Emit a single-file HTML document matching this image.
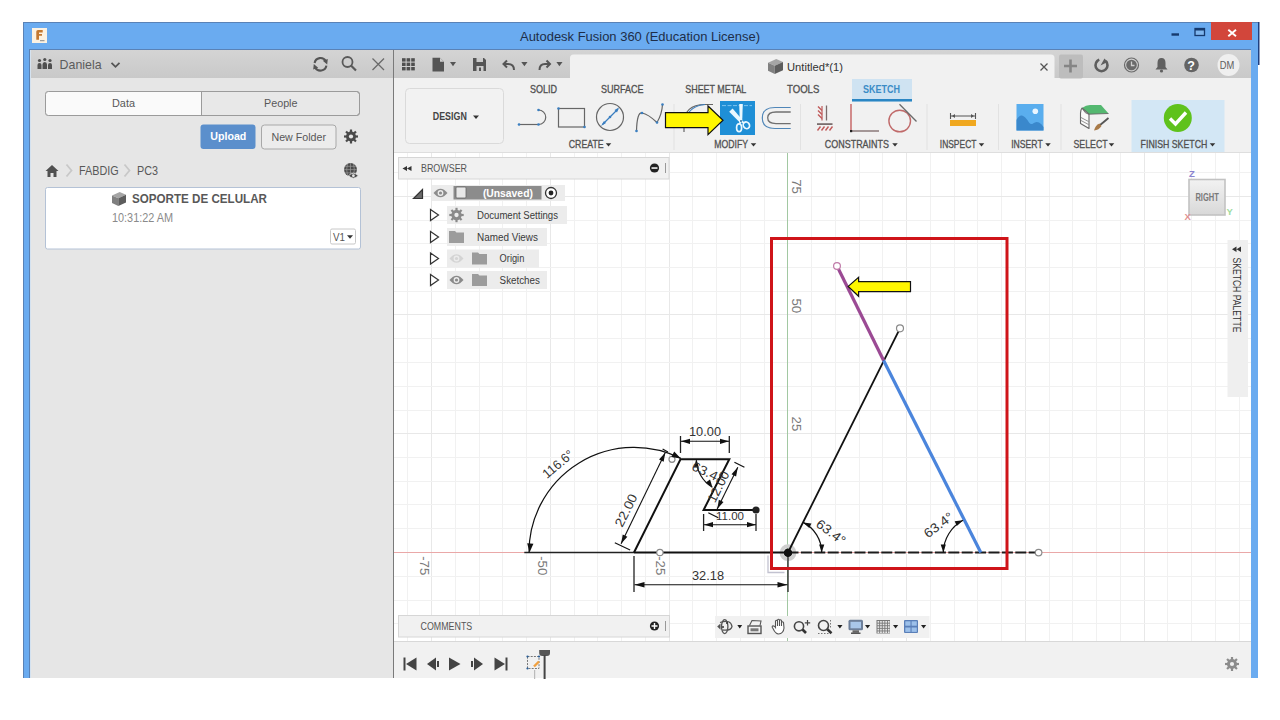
<!DOCTYPE html>
<html><head><meta charset="utf-8"><style>
html,body{margin:0;padding:0;background:#fff;}
body{width:1280px;height:720px;overflow:hidden;}
svg{display:block;font-family:"Liberation Sans",sans-serif;}
</style></head><body>
<svg width="1280" height="720" viewBox="0 0 1280 720">
<rect x="0" y="0" width="1280" height="720" fill="#ffffff" />
<rect x="23" y="22" width="1235" height="656" fill="#6aabf0" />
<rect x="23" y="22" width="1" height="656" fill="#5a82b6" />
<rect x="23" y="22" width="1235" height="1" fill="#5a82b6" />
<rect x="1258" y="22" width="1.5" height="43" fill="#1f3f80" />
<rect x="32" y="28" width="15" height="15" fill="#fdf2e2" />
<path d="M36.3,39.7 V31.5 Q36.3,30 38,30 H42.7 V32.6 H39 V34 H42 V35.8 H39 V39.7 Z" fill="#c47830" stroke="none" stroke-width="1" />
<rect x="40" y="40.2" width="4.5" height="1" fill="#888" />
<text x="520" y="40.5" font-size="13.2" fill="#1e2e48" textLength="240" lengthAdjust="spacingAndGlyphs" >Autodesk Fusion 360 (Education License)</text>
<rect x="1171.5" y="33.3" width="7.5" height="2.4" fill="#163a6e" />
<rect x="1195" y="28.5" width="9.5" height="7" fill="#7fb6ee" stroke="#163a6e" stroke-width="1.3"/>
<rect x="1195" y="28" width="9.5" height="2.5" fill="#163a6e" />
<rect x="1211" y="22" width="41" height="18" fill="#d2463b" />
<path d="M1228.3,29.8 L1236,36.3 M1236,29.8 L1228.3,36.3" fill="none" stroke="#fff" stroke-width="1.9" />
<rect x="30" y="50" width="364" height="628" fill="#e6e6e6" />
<defs><linearGradient id="hdr" x1="0" y1="0" x2="0" y2="1"><stop offset="0" stop-color="#d4d4d4"/><stop offset="1" stop-color="#c9c9c9"/></linearGradient></defs>
<rect x="30" y="50" width="1221" height="28" fill="url(#hdr)" />
<rect x="29" y="49" width="1222" height="1" fill="#5a82b6" />
<rect x="29" y="49" width="1" height="629" fill="#5a82b6" />
<rect x="30" y="50" width="1" height="628" fill="#d4e2f0" />
<rect x="394" y="78" width="857" height="75" fill="#f1f1f1" />
<rect x="394" y="152" width="857" height="1" fill="#dedede" />
<rect x="394" y="153" width="857" height="488" fill="#ffffff" />
<rect x="394" y="641" width="857" height="37" fill="#f1f1f1" />
<rect x="394" y="641" width="857" height="1" fill="#d8d8d8" />
<rect x="393" y="50" width="1" height="628" fill="#7a7a7a" />
<text x="59.6" y="69" font-size="12.8" fill="#5c5c5c" textLength="42" lengthAdjust="spacingAndGlyphs" >Daniela</text>
<circle cx="39.5" cy="60.5" r="1.6" fill="#505050"/>
<circle cx="44.8" cy="59.5" r="1.6" fill="#505050"/>
<circle cx="50" cy="60.5" r="1.6" fill="#505050"/>
<path d="M37.5,69 V65 Q37.5,63 39.5,63 Q41.5,63 41.5,65 V69 Z M42.5,69 V64.5 Q42.5,62 44.8,62 Q47,62 47,64.5 V69 Z M48,69 V65 Q48,63 50,63 Q52,63 52,65 V69 Z" fill="#505050" stroke="none" stroke-width="1" />
<path d="M111.5,62.8 L115.5,66.8 L119.5,62.8" fill="none" stroke="#555" stroke-width="1.8" />
<path d="M314.6,63 A6,6 0 0 1 325.8,61.2 M326.4,65.6 A6,6 0 0 1 315.2,67.4" fill="none" stroke="#555" stroke-width="2.1" />
<path d="M322.8,60.8 L327.8,59 L327.2,64.6 Z M318.2,67.8 L313.2,69.6 L313.8,64 Z" fill="#555" stroke="none" stroke-width="1" />
<circle cx="347.5" cy="62" r="5" fill="none" stroke="#5a5a5a" stroke-width="1.8"/>
<path d="M351,65.5 L356,70.5" fill="none" stroke="#5a5a5a" stroke-width="2.2" />
<path d="M372.5,58.5 L384,70 M384,58.5 L372.5,70" fill="none" stroke="#6a6a6a" stroke-width="1.3" />
<rect x="45.5" y="91.5" width="314" height="24" fill="#e8e8e8" rx="3" stroke="#9b9b9b" stroke-width="1"/>
<path d="M45.5,94.5 Q45.5,91.5 48.5,91.5 H201 V115.5 H48.5 Q45.5,115.5 45.5,112.5 Z" fill="#fafafa" stroke="none" stroke-width="1" />
<rect x="45.5" y="91.5" width="314" height="24" fill="none" rx="3" stroke="#9b9b9b" stroke-width="1"/>
<rect x="201" y="91.5" width="1" height="24" fill="#9b9b9b" />
<text x="112" y="107" font-size="11.5" fill="#585858" textLength="23" lengthAdjust="spacingAndGlyphs" >Data</text>
<text x="264" y="107" font-size="11.5" fill="#585858" textLength="33.5" lengthAdjust="spacingAndGlyphs" >People</text>
<rect x="200.5" y="124.5" width="55" height="24.5" fill="#5b8fcc" rx="3"/>
<text x="210.3" y="140.2" font-size="11.5" fill="#fff" textLength="36" lengthAdjust="spacingAndGlyphs" font-weight="bold" >Upload</text>
<rect x="261.5" y="125" width="74.5" height="24" fill="#ececec" rx="3" stroke="#a8a8a8" stroke-width="1"/>
<text x="271.5" y="141.2" font-size="11.5" fill="#585858" textLength="54.5" lengthAdjust="spacingAndGlyphs" >New Folder</text>
<line x1="351" y1="136.5" x2="358.00" y2="136.50" stroke="#4a4a4a" stroke-width="2.2"/><line x1="351" y1="136.5" x2="355.95" y2="141.45" stroke="#4a4a4a" stroke-width="2.2"/><line x1="351" y1="136.5" x2="351.00" y2="143.50" stroke="#4a4a4a" stroke-width="2.2"/><line x1="351" y1="136.5" x2="346.05" y2="141.45" stroke="#4a4a4a" stroke-width="2.2"/><line x1="351" y1="136.5" x2="344.00" y2="136.50" stroke="#4a4a4a" stroke-width="2.2"/><line x1="351" y1="136.5" x2="346.05" y2="131.55" stroke="#4a4a4a" stroke-width="2.2"/><line x1="351" y1="136.5" x2="351.00" y2="129.50" stroke="#4a4a4a" stroke-width="2.2"/><line x1="351" y1="136.5" x2="355.95" y2="131.55" stroke="#4a4a4a" stroke-width="2.2"/><circle cx="351" cy="136.5" r="5.04" fill="#4a4a4a"/><circle cx="351" cy="136.5" r="2.10" fill="#e6e6e6"/>
<path d="M45.5,171 L52,165 L58.5,171 H56.5 V177 H53.5 V173 H50.5 V177 H47.5 V171 Z" fill="#505050" stroke="none" stroke-width="1" />
<path d="M66.5,164.5 L71.5,170.5 L66.5,176.5" fill="none" stroke="#c8c8c8" stroke-width="1.8" />
<text x="79" y="175.2" font-size="12.3" fill="#585858" textLength="39.6" lengthAdjust="spacingAndGlyphs" >FABDIG</text>
<path d="M124.5,164.5 L129.5,170.5 L124.5,176.5" fill="none" stroke="#c8c8c8" stroke-width="1.8" />
<text x="137" y="175.2" font-size="12.3" fill="#585858" textLength="21" lengthAdjust="spacingAndGlyphs" >PC3</text>
<circle cx="350.5" cy="169.6" r="6.5" fill="#4a4a4a"/>
<path d="M344,169.6 H357 M350.5,163 V176 M345,166.3 H356 M345,172.9 H356 M347.5,164 Q345.8,169.6 347.5,175.2 M353.5,164 Q355.2,169.6 353.5,175.2" fill="none" stroke="#9a9a9a" stroke-width="0.7" />
<path d="M348.5,175.7 Q353.4,170.8 358.3,175.7 Q353.4,180.6 348.5,175.7 Z" fill="#4a4a4a" stroke="#e6e6e6" stroke-width="0.8" />
<circle cx="353.4" cy="175.7" r="1.4" fill="#e6e6e6"/>
<rect x="45.5" y="187.5" width="315" height="61.5" fill="#ffffff" stroke="#b4c2d6" stroke-width="1" rx="2"/>
<path d="M112,195.5 L119.7,192 L126,194.8 L118.3,198.3 Z" fill="#a5a5a5"/>
<path d="M112,195.5 L118.3,198.3 L118.3,206 L112,202.92 Z" fill="#808080"/>
<path d="M118.3,198.3 L126,194.8 L126,202.5 L118.3,206 Z" fill="#5d5d5d"/>
<text x="132" y="203.4" font-size="13" fill="#585858" textLength="135" lengthAdjust="spacingAndGlyphs" font-weight="bold" >SOPORTE DE CELULAR</text>
<text x="112" y="221.6" font-size="12" fill="#8a8a8a" textLength="61" lengthAdjust="spacingAndGlyphs" >10:31:22 AM</text>
<rect x="330.5" y="229" width="25" height="15" fill="#fff" stroke="#c8c8c8" stroke-width="1" rx="1.5"/>
<text x="333" y="240.5" font-size="10.5" fill="#555" textLength="12" lengthAdjust="spacingAndGlyphs" >V1</text>
<path d="M347.0,235.3 L353.0,235.3 L350,238.8 Z" fill="#333" stroke="none" stroke-width="1" />
<rect x="402.0" y="58.2" width="3.6" height="3.4" fill="#4f4f4f" />
<rect x="402.0" y="62.6" width="3.6" height="3.4" fill="#4f4f4f" />
<rect x="402.0" y="67.0" width="3.6" height="3.4" fill="#4f4f4f" />
<rect x="406.6" y="58.2" width="3.6" height="3.4" fill="#4f4f4f" />
<rect x="406.6" y="62.6" width="3.6" height="3.4" fill="#4f4f4f" />
<rect x="406.6" y="67.0" width="3.6" height="3.4" fill="#4f4f4f" />
<rect x="411.2" y="58.2" width="3.6" height="3.4" fill="#4f4f4f" />
<rect x="411.2" y="62.6" width="3.6" height="3.4" fill="#4f4f4f" />
<rect x="411.2" y="67.0" width="3.6" height="3.4" fill="#4f4f4f" />
<path d="M432.5,57.7 H440 L444,61.7 V71.5 H432.5 Z" fill="#555" stroke="none" stroke-width="1" />
<path d="M440,57.7 V61.7 H444 Z" fill="#cfcfcf" stroke="none" stroke-width="1" />
<path d="M450,62 H456 L453,66.2 Z" fill="#555" stroke="none" stroke-width="1" />
<path d="M473,58 H484 L486,60 V71 H473 Z" fill="#555" stroke="none" stroke-width="1" />
<rect x="476.5" y="58" width="6.5" height="4" fill="#cbcbcb" />
<rect x="476.5" y="66" width="7" height="5" fill="#cbcbcb" />
<rect x="479" y="67.5" width="2" height="3.5" fill="#555" />
<path d="M507,60.5 L503.5,64 L507,67.5" fill="none" stroke="#555" stroke-width="2" />
<path d="M504,64 H508 Q514,64 514,70" fill="none" stroke="#555" stroke-width="2" />
<path d="M521.3,62 H527.5 L524.4,66.2 Z" fill="#555" stroke="none" stroke-width="1" />
<path d="M546.5,60.5 L550,64 L546.5,67.5" fill="none" stroke="#555" stroke-width="2" />
<path d="M549.5,64 H545 Q539.5,64 539.5,70" fill="none" stroke="#555" stroke-width="2" />
<path d="M556.4,62 H562.5 L559.4,66.2 Z" fill="#555" stroke="none" stroke-width="1" />
<path d="M570,78 V58 Q570,54.5 573.5,54.5 H1051 Q1054.5,54.5 1054.5,58 V78 Z" fill="#f1f1f1" stroke="none" stroke-width="1" />
<path d="M768,62.75 L776.25,59 L783,62.0 L774.75,65.75 Z" fill="#a5a5a5"/>
<path d="M768,62.75 L774.75,65.75 L774.75,74 L768,70.7 Z" fill="#808080"/>
<path d="M774.75,65.75 L783,62.0 L783,70.25 L774.75,74 Z" fill="#5d5d5d"/>
<text x="787" y="70.9" font-size="11" fill="#333" textLength="56" lengthAdjust="spacingAndGlyphs" >Untitled*(1)</text>
<path d="M1040.5,63.5 L1047.5,70.5 M1047.5,63.5 L1040.5,70.5" fill="none" stroke="#555" stroke-width="1.3" />
<rect x="1059" y="54.5" width="24" height="24" fill="#bdbdbd" rx="2"/>
<path d="M1070.5,59.5 V72.5 M1064,66 H1077" fill="none" stroke="#858585" stroke-width="2.6" />
<circle cx="1101.5" cy="65.2" r="6" fill="none" stroke="#5e5e5e" stroke-width="2.6" stroke-dasharray="30 7.7" transform="rotate(-45 1101.5 65.2)"/>
<path d="M1100.5,65.5 L1104.5,58.5 L1107.5,62 Z" fill="#5e5e5e" stroke="none" stroke-width="1" />
<circle cx="1131.5" cy="65" r="7" fill="none" stroke="#6a6a6a" stroke-width="1.2"/><circle cx="1131.5" cy="65" r="5.3" fill="#6a6a6a"/>
<path d="M1131.5,61.5 V65.5 H1134.5" fill="none" stroke="#cfcfcf" stroke-width="1.3" />
<path d="M1155.5,69.5 H1167.5 L1165.5,67 V63 Q1165.5,58 1161.5,58 Q1157.5,58 1157.5,63 V67 Z" fill="#606060" stroke="none" stroke-width="1" />
<circle cx="1161.5" cy="71" r="1.6" fill="#606060"/>
<circle cx="1191.5" cy="65" r="7.3" fill="#646464"/>
<text x="1187.3" y="69.8" font-size="12.5" fill="#fff" font-weight="bold" >?</text>
<circle cx="1228.5" cy="65" r="11" fill="#efefef"/>
<text x="1219.8" y="69.3" font-size="10.5" fill="#606060" textLength="14.5" lengthAdjust="spacingAndGlyphs" >DM</text>
<rect x="405.5" y="88.5" width="98" height="55" fill="#f2f2f2" rx="4" stroke="#dadada" stroke-width="1"/>
<text x="432.8" y="120.2" font-size="10.5" fill="#444" textLength="34" lengthAdjust="spacingAndGlyphs" font-weight="bold" >DESIGN</text>
<path d="M473.0,115.5 L479.0,115.5 L476,119.0 Z" fill="#333" stroke="none" stroke-width="1" />
<text x="530" y="93" font-size="10.5" fill="#505050" textLength="27" lengthAdjust="spacingAndGlyphs" stroke="#505050" stroke-width="0.3">SOLID</text>
<text x="601" y="93" font-size="10.5" fill="#505050" textLength="42.5" lengthAdjust="spacingAndGlyphs" stroke="#505050" stroke-width="0.3">SURFACE</text>
<text x="685.3" y="93" font-size="10.5" fill="#505050" textLength="61" lengthAdjust="spacingAndGlyphs" stroke="#505050" stroke-width="0.3">SHEET METAL</text>
<text x="787" y="93" font-size="10.5" fill="#505050" textLength="32.3" lengthAdjust="spacingAndGlyphs" stroke="#505050" stroke-width="0.3">TOOLS</text>
<rect x="852" y="79" width="60" height="22.5" fill="#cfe3f2" />
<rect x="852" y="99" width="60" height="2.5" fill="#2a86c4" />
<text x="863" y="93" font-size="10.5" fill="#3b8cc6" textLength="37" lengthAdjust="spacingAndGlyphs" font-weight="bold" >SKETCH</text>
<rect x="1131.5" y="100" width="93" height="52" fill="#d3e7f5" />
<text x="568.8" y="148.4" font-size="10.5" fill="#505050" textLength="34.8" lengthAdjust="spacingAndGlyphs" stroke="#505050" stroke-width="0.3">CREATE</text>
<path d="M605.75,143.125 L611.25,143.125 L608.5,146.375 Z" fill="#333" stroke="none" stroke-width="1" />
<text x="714.2" y="148.4" font-size="10.5" fill="#505050" textLength="33.8" lengthAdjust="spacingAndGlyphs" stroke="#505050" stroke-width="0.3">MODIFY</text>
<path d="M750.75,143.125 L756.25,143.125 L753.5,146.375 Z" fill="#333" stroke="none" stroke-width="1" />
<text x="824.8" y="148.4" font-size="10.5" fill="#505050" textLength="64.2" lengthAdjust="spacingAndGlyphs" stroke="#505050" stroke-width="0.3">CONSTRAINTS</text>
<path d="M892.25,143.125 L897.75,143.125 L895,146.375 Z" fill="#333" stroke="none" stroke-width="1" />
<text x="939.8" y="148.4" font-size="10.5" fill="#505050" textLength="36.6" lengthAdjust="spacingAndGlyphs" stroke="#505050" stroke-width="0.3">INSPECT</text>
<path d="M978.75,143.125 L984.25,143.125 L981.5,146.375 Z" fill="#333" stroke="none" stroke-width="1" />
<text x="1011.2" y="148.4" font-size="10.5" fill="#505050" textLength="31.5" lengthAdjust="spacingAndGlyphs" stroke="#505050" stroke-width="0.3">INSERT</text>
<path d="M1045.25,143.125 L1050.75,143.125 L1048,146.375 Z" fill="#333" stroke="none" stroke-width="1" />
<text x="1073.5" y="148.4" font-size="10.5" fill="#505050" textLength="34.2" lengthAdjust="spacingAndGlyphs" stroke="#505050" stroke-width="0.3">SELECT</text>
<path d="M1108.75,143.125 L1114.25,143.125 L1111.5,146.375 Z" fill="#333" stroke="none" stroke-width="1" />
<text x="1140.6" y="148.4" font-size="10.5" fill="#505050" textLength="66.7" lengthAdjust="spacingAndGlyphs" stroke="#505050" stroke-width="0.3">FINISH SKETCH</text>
<path d="M1209.75,143.125 L1215.25,143.125 L1212.5,146.375 Z" fill="#333" stroke="none" stroke-width="1" />
<rect x="673.5" y="104" width="1" height="46" fill="#e2e2e2" />
<rect x="800" y="104" width="1" height="46" fill="#e2e2e2" />
<rect x="926.5" y="104" width="1" height="46" fill="#e2e2e2" />
<rect x="998" y="104" width="1" height="46" fill="#e2e2e2" />
<rect x="1060.5" y="104" width="1" height="46" fill="#e2e2e2" />
<path d="M519,124.5 H538.5" fill="none" stroke="#666" stroke-width="1.2" />
<path d="M538.5,110 A7.2,7.2 0 0 1 538.5,124.5" fill="none" stroke="#666" stroke-width="1.2" />
<circle cx="519" cy="124.5" r="1.3" fill="#3a7ec0"/>
<circle cx="538.5" cy="124.5" r="1.3" fill="#3a7ec0"/>
<circle cx="538.5" cy="110" r="1.3" fill="#3a7ec0"/>
<rect x="558.5" y="108.5" width="26" height="18.5" fill="none" stroke="#666" stroke-width="1.2"/>
<circle cx="558.5" cy="108.5" r="1.3" fill="#3a7ec0"/>
<circle cx="584.5" cy="127" r="1.3" fill="#3a7ec0"/>
<circle cx="610" cy="117" r="13.5" fill="none" stroke="#666" stroke-width="1.2"/>
<path d="M602.5,124.5 L618,109" fill="none" stroke="#3a7ec0" stroke-width="1.2" />
<path d="M601,126 L604,121 L606,123 Z M619,107.5 L614.5,110 L617,112.5 Z" fill="#3a7ec0" stroke="none" stroke-width="1" />
<circle cx="610" cy="117" r="1.3" fill="#3a7ec0"/>
<path d="M636.5,131 Q637,112 642,113 Q648,114 657,122.5 Q662,114 662.5,104.5" fill="none" stroke="#666" stroke-width="1.2" />
<circle cx="636.5" cy="131" r="1.3" fill="#3a7ec0"/>
<circle cx="642" cy="113" r="1.3" fill="#3a7ec0"/>
<circle cx="657" cy="122.5" r="1.3" fill="#3a7ec0"/>
<circle cx="662.5" cy="104.5" r="1.3" fill="#3a7ec0"/>
<path d="M684,132 V124 Q684,104.5 705,104.5 H713" fill="none" stroke="#666" stroke-width="1.2" />
<path d="M686,118 Q690,106 705,104.5" fill="none" stroke="#3a7ec0" stroke-width="1.2" />
<rect x="720" y="101" width="35" height="34" fill="#1f8fd6" />
<path d="M722,105.6 H752" fill="none" stroke="#7cc4f0" stroke-width="1" stroke-dasharray="4 1.5"/>
<path d="M739.2,104 L742.8,104 L742.2,121.5 L739.8,121.5 Z" fill="#eaf8ff" stroke="none" stroke-width="1" />
<path d="M729.2,111.8 L732.6,108.4 L742.3,119.8 L739.6,122.3 Z" fill="#eaf8ff" stroke="none" stroke-width="1" />
<ellipse cx="739.1" cy="127.8" rx="2.5" ry="3.9" fill="none" stroke="#eaf8ff" stroke-width="1.7"/>
<ellipse cx="746.4" cy="125.3" rx="3" ry="3.5" transform="rotate(-35 746.4 125.3)" fill="none" stroke="#eaf8ff" stroke-width="1.7"/>
<path d="M740.6,121 L739.6,124 M741.4,121.2 L744,123" fill="none" stroke="#eaf8ff" stroke-width="1.8" />
<circle cx="741" cy="121" r="0.9" fill="#1a5f90"/>
<path d="M790.7,107.5 H775 Q762.3,107.5 762.3,118 Q762.3,128.5 775,128.5 H790.7" fill="none" stroke="#4f86b8" stroke-width="1.2" />
<path d="M790.7,112 H776 Q767.7,112 767.7,117.8 Q767.7,123.6 776,123.6 H790.7" fill="none" stroke="#707070" stroke-width="1.3" />
<path d="M665.5,112.7 H708 V106 L723,120.3 L708,134.7 V127.7 H665.5 Z" fill="#fff600" stroke="#111" stroke-width="1.2" />
<path d="M822,106 V120.5" fill="none" stroke="#c05a5a" stroke-width="1.2" />
<path d="M826.5,105.5 V120.5" fill="none" stroke="#7a6a6a" stroke-width="1.3" />
<path d="M818,106.5 L822,110.5 M818,110.5 L822,114.5 M818,114.5 L822,118.5" fill="none" stroke="#c05a5a" stroke-width="1.4" />
<rect x="817" y="123.2" width="15.5" height="1.8" fill="#7a6e6e" />
<path d="M817.5,130.5 L820.5,126.5 M821.5,130.5 L824.5,126.5 M825.5,130.5 L828.5,126.5 M829.5,130.5 L832.5,126.5" fill="none" stroke="#c05a5a" stroke-width="1.4" />
<path d="M851,104 V130.5" fill="none" stroke="#c46060" stroke-width="1.4" />
<path d="M852,131 H879" fill="none" stroke="#8a7878" stroke-width="1.5" />
<rect x="850" y="130" width="2.2" height="2.2" fill="#222" />
<circle cx="899.7" cy="121" r="10.8" fill="none" stroke="#c06a6a" stroke-width="1.4"/>
<path d="M899.5,104.3 L916.5,121.5" fill="none" stroke="#6a6a6a" stroke-width="1.3" />
<path d="M950.5,113 V119 M975.5,113 V119 M951,116 H975" fill="none" stroke="#555" stroke-width="1.1" />
<path d="M952,116 L955,114 V118 Z M974,116 L971,114 V118 Z" fill="#555" stroke="none" stroke-width="1" />
<rect x="950" y="120" width="26" height="6" fill="#f0a820" />
<rect x="1016.5" y="104" width="27" height="26.5" fill="#5aaeee" />
<path d="M1016.5,130.5 V120 Q1019,115 1022,115.5 Q1025,116 1029,122.5 Q1031,125 1033,123.5 Q1036,121 1039,122.5 Q1042,124 1043.5,127 V130.5 Z" fill="#3a88cc" stroke="none" stroke-width="1" />
<circle cx="1035.3" cy="111.3" r="2.8" fill="#eaf6ff"/>
<path d="M1082,108 Q1086,105 1090,105 L1101,105 L1108.5,113.5 L1088,114.2 Z" fill="#54b870" stroke="none" stroke-width="1" />
<path d="M1082,108 Q1080.5,110 1080.5,113 V123.5 L1089,128.5 V114.2 Z" fill="#fafafa" stroke="#666" stroke-width="1.1" stroke-linejoin="round"/>
<path d="M1082,108 Q1085,114 1088.5,114.2 L1108.5,113.5" fill="none" stroke="#666" stroke-width="0.9" />
<path d="M1081,117.5 L1088.5,121.5 M1081,120.5 L1088.5,124.5" fill="none" stroke="#777" stroke-width="0.8" />
<path d="M1108.5,118 L1099.5,125.5" fill="none" stroke="#555" stroke-width="1.8" />
<path d="M1099.5,123.5 Q1095.5,125 1094,130.5 Q1099,130 1101.5,126 Z" fill="#a87a48" stroke="none" stroke-width="1" />
<circle cx="1177.8" cy="118" r="14" fill="#5fc21c"/>
<path d="M1170,118.5 L1175.5,124 L1186,112.5" fill="none" stroke="#fff" stroke-width="3.4" />
<line x1="407.5" y1="153" x2="407.5" y2="641" stroke="#f1f1f1" stroke-width="1"/><line x1="431.5" y1="153" x2="431.5" y2="641" stroke="#e8e8e8" stroke-width="1"/><line x1="455.5" y1="153" x2="455.5" y2="641" stroke="#f1f1f1" stroke-width="1"/><line x1="479.5" y1="153" x2="479.5" y2="641" stroke="#f1f1f1" stroke-width="1"/><line x1="502.5" y1="153" x2="502.5" y2="641" stroke="#f1f1f1" stroke-width="1"/><line x1="526.5" y1="153" x2="526.5" y2="641" stroke="#f1f1f1" stroke-width="1"/><line x1="550.5" y1="153" x2="550.5" y2="641" stroke="#e8e8e8" stroke-width="1"/><line x1="574.5" y1="153" x2="574.5" y2="641" stroke="#f1f1f1" stroke-width="1"/><line x1="597.5" y1="153" x2="597.5" y2="641" stroke="#f1f1f1" stroke-width="1"/><line x1="621.5" y1="153" x2="621.5" y2="641" stroke="#f1f1f1" stroke-width="1"/><line x1="645.5" y1="153" x2="645.5" y2="641" stroke="#f1f1f1" stroke-width="1"/><line x1="669.5" y1="153" x2="669.5" y2="641" stroke="#e8e8e8" stroke-width="1"/><line x1="692.5" y1="153" x2="692.5" y2="641" stroke="#f1f1f1" stroke-width="1"/><line x1="716.5" y1="153" x2="716.5" y2="641" stroke="#f1f1f1" stroke-width="1"/><line x1="740.5" y1="153" x2="740.5" y2="641" stroke="#f1f1f1" stroke-width="1"/><line x1="764.5" y1="153" x2="764.5" y2="641" stroke="#f1f1f1" stroke-width="1"/><line x1="787.5" y1="153" x2="787.5" y2="641" stroke="#e8e8e8" stroke-width="1"/><line x1="811.5" y1="153" x2="811.5" y2="641" stroke="#f1f1f1" stroke-width="1"/><line x1="835.5" y1="153" x2="835.5" y2="641" stroke="#f1f1f1" stroke-width="1"/><line x1="859.5" y1="153" x2="859.5" y2="641" stroke="#f1f1f1" stroke-width="1"/><line x1="882.5" y1="153" x2="882.5" y2="641" stroke="#f1f1f1" stroke-width="1"/><line x1="906.5" y1="153" x2="906.5" y2="641" stroke="#e8e8e8" stroke-width="1"/><line x1="930.5" y1="153" x2="930.5" y2="641" stroke="#f1f1f1" stroke-width="1"/><line x1="954.5" y1="153" x2="954.5" y2="641" stroke="#f1f1f1" stroke-width="1"/><line x1="977.5" y1="153" x2="977.5" y2="641" stroke="#f1f1f1" stroke-width="1"/><line x1="1001.5" y1="153" x2="1001.5" y2="641" stroke="#f1f1f1" stroke-width="1"/><line x1="1025.5" y1="153" x2="1025.5" y2="641" stroke="#e8e8e8" stroke-width="1"/><line x1="1049.5" y1="153" x2="1049.5" y2="641" stroke="#f1f1f1" stroke-width="1"/><line x1="1072.5" y1="153" x2="1072.5" y2="641" stroke="#f1f1f1" stroke-width="1"/><line x1="1096.5" y1="153" x2="1096.5" y2="641" stroke="#f1f1f1" stroke-width="1"/><line x1="1120.5" y1="153" x2="1120.5" y2="641" stroke="#f1f1f1" stroke-width="1"/><line x1="1144.5" y1="153" x2="1144.5" y2="641" stroke="#e8e8e8" stroke-width="1"/><line x1="1167.5" y1="153" x2="1167.5" y2="641" stroke="#f1f1f1" stroke-width="1"/><line x1="1191.5" y1="153" x2="1191.5" y2="641" stroke="#f1f1f1" stroke-width="1"/><line x1="1215.5" y1="153" x2="1215.5" y2="641" stroke="#f1f1f1" stroke-width="1"/><line x1="1239.5" y1="153" x2="1239.5" y2="641" stroke="#f1f1f1" stroke-width="1"/><line x1="394" y1="172.5" x2="1251" y2="172.5" stroke="#f1f1f1" stroke-width="1"/><line x1="394" y1="196.5" x2="1251" y2="196.5" stroke="#e8e8e8" stroke-width="1"/><line x1="394" y1="220.5" x2="1251" y2="220.5" stroke="#f1f1f1" stroke-width="1"/><line x1="394" y1="243.5" x2="1251" y2="243.5" stroke="#f1f1f1" stroke-width="1"/><line x1="394" y1="267.5" x2="1251" y2="267.5" stroke="#f1f1f1" stroke-width="1"/><line x1="394" y1="291.5" x2="1251" y2="291.5" stroke="#f1f1f1" stroke-width="1"/><line x1="394" y1="314.5" x2="1251" y2="314.5" stroke="#e8e8e8" stroke-width="1"/><line x1="394" y1="338.5" x2="1251" y2="338.5" stroke="#f1f1f1" stroke-width="1"/><line x1="394" y1="362.5" x2="1251" y2="362.5" stroke="#f1f1f1" stroke-width="1"/><line x1="394" y1="386.5" x2="1251" y2="386.5" stroke="#f1f1f1" stroke-width="1"/><line x1="394" y1="410.5" x2="1251" y2="410.5" stroke="#f1f1f1" stroke-width="1"/><line x1="394" y1="433.5" x2="1251" y2="433.5" stroke="#e8e8e8" stroke-width="1"/><line x1="394" y1="457.5" x2="1251" y2="457.5" stroke="#f1f1f1" stroke-width="1"/><line x1="394" y1="481.5" x2="1251" y2="481.5" stroke="#f1f1f1" stroke-width="1"/><line x1="394" y1="504.5" x2="1251" y2="504.5" stroke="#f1f1f1" stroke-width="1"/><line x1="394" y1="528.5" x2="1251" y2="528.5" stroke="#f1f1f1" stroke-width="1"/><line x1="394" y1="552.5" x2="1251" y2="552.5" stroke="#e8e8e8" stroke-width="1"/><line x1="394" y1="576.5" x2="1251" y2="576.5" stroke="#f1f1f1" stroke-width="1"/><line x1="394" y1="600.5" x2="1251" y2="600.5" stroke="#f1f1f1" stroke-width="1"/><line x1="394" y1="623.5" x2="1251" y2="623.5" stroke="#f1f1f1" stroke-width="1"/>
<line x1="394" y1="552.5" x2="1251" y2="552.5" stroke="#eaa8a8" stroke-width="1" />
<line x1="787.5" y1="153" x2="787.5" y2="641" stroke="#a2c8a2" stroke-width="1" />
<text transform="translate(424.2,565.7) rotate(90)" x="0" y="0" font-size="13.5" fill="#7a7a7a" text-anchor="middle" dominant-baseline="central" textLength="19" lengthAdjust="spacingAndGlyphs">-75</text>
<text transform="translate(542.2,565.7) rotate(90)" x="0" y="0" font-size="13.5" fill="#7a7a7a" text-anchor="middle" dominant-baseline="central" textLength="19" lengthAdjust="spacingAndGlyphs">-50</text>
<text transform="translate(660.5,565.7) rotate(90)" x="0" y="0" font-size="13.5" fill="#7a7a7a" text-anchor="middle" dominant-baseline="central" textLength="19" lengthAdjust="spacingAndGlyphs">-25</text>
<text transform="translate(796.8,186.6) rotate(90)" x="0" y="0" font-size="13.5" fill="#7a7a7a" text-anchor="middle" dominant-baseline="central" textLength="14.8" lengthAdjust="spacingAndGlyphs">75</text>
<text transform="translate(796.8,305.8) rotate(90)" x="0" y="0" font-size="13.5" fill="#7a7a7a" text-anchor="middle" dominant-baseline="central" textLength="14.8" lengthAdjust="spacingAndGlyphs">50</text>
<text transform="translate(796.5,424) rotate(90)" x="0" y="0" font-size="13.5" fill="#7a7a7a" text-anchor="middle" dominant-baseline="central" textLength="14.8" lengthAdjust="spacingAndGlyphs">25</text>
<rect x="398.5" y="157.5" width="270.5" height="21.5" fill="#f1f1f1" stroke="#d6d6d6" stroke-width="1"/>
<path d="M402.5,168.5 L407,166 V171 Z M407,168.5 L411.5,166 V171 Z" fill="#333" stroke="none" stroke-width="1" />
<text x="421" y="171.5" font-size="10.5" fill="#555" textLength="46" lengthAdjust="spacingAndGlyphs" >BROWSER</text>
<circle cx="654.5" cy="168" r="4.6" fill="#222"/>
<rect x="651.5" y="167.3" width="6" height="1.5" fill="#fff" />
<rect x="665" y="163" width="1" height="10" fill="#999" />
<rect x="432" y="185" width="133" height="16" fill="#ececec" />
<path d="M413.5,198.5 L422.5,189.5 V198.5 Z" fill="#6a6a6a" stroke="#333" stroke-width="1.2" />
<path d="M433.5,193 Q440.5,184.5 447.5,193 Q440.5,201.5 433.5,193 Z" fill="#8c8c8c"/>
<circle cx="440.5" cy="193" r="2.9" fill="#ececec"/><circle cx="440.5" cy="193" r="1.6" fill="#8c8c8c"/>
<rect x="453.5" y="186" width="88" height="13.5" fill="#8c8c8c" />
<rect x="456" y="187" width="10" height="11" fill="#e8e8e8" stroke="#666" stroke-width="0.8" rx="1"/>
<text x="482.9" y="196.7" font-size="10.5" fill="#fff" textLength="50" lengthAdjust="spacingAndGlyphs" font-weight="bold" >(Unsaved)</text>
<circle cx="551" cy="193" r="5.5" fill="#fff" stroke="#333" stroke-width="1.3"/><circle cx="551" cy="193" r="2.4" fill="#222"/>
<rect x="447" y="206" width="120" height="18" fill="#ececec" />
<path d="M430.5,209.5 L438.5,215 L430.5,220.5 Z" fill="#fff" stroke="#333" stroke-width="1.2" />
<line x1="456.5" y1="215" x2="463.70" y2="215.00" stroke="#8a8a8a" stroke-width="2.2"/><line x1="456.5" y1="215" x2="461.59" y2="220.09" stroke="#8a8a8a" stroke-width="2.2"/><line x1="456.5" y1="215" x2="456.50" y2="222.20" stroke="#8a8a8a" stroke-width="2.2"/><line x1="456.5" y1="215" x2="451.41" y2="220.09" stroke="#8a8a8a" stroke-width="2.2"/><line x1="456.5" y1="215" x2="449.30" y2="215.00" stroke="#8a8a8a" stroke-width="2.2"/><line x1="456.5" y1="215" x2="451.41" y2="209.91" stroke="#8a8a8a" stroke-width="2.2"/><line x1="456.5" y1="215" x2="456.50" y2="207.80" stroke="#8a8a8a" stroke-width="2.2"/><line x1="456.5" y1="215" x2="461.59" y2="209.91" stroke="#8a8a8a" stroke-width="2.2"/><circle cx="456.5" cy="215" r="5.18" fill="#8a8a8a"/><circle cx="456.5" cy="215" r="2.16" fill="#ececec"/>
<text x="477" y="218.5" font-size="10" fill="#3a3a3a" textLength="81" lengthAdjust="spacingAndGlyphs" >Document Settings</text>
<rect x="447" y="228" width="100" height="18" fill="#ececec" />
<path d="M430.5,231.5 L438.5,237 L430.5,242.5 Z" fill="#fff" stroke="#333" stroke-width="1.2" />
<path d="M449,231 H455 L456.5,232.5 H464 V243 H449 Z" fill="#9c9c9c" stroke="none" stroke-width="1" />
<text x="477" y="240.5" font-size="10" fill="#3a3a3a" textLength="61" lengthAdjust="spacingAndGlyphs" >Named Views</text>
<rect x="447" y="249.5" width="92" height="18" fill="#ececec" />
<path d="M430.5,253.0 L438.5,258.5 L430.5,264.0 Z" fill="#fff" stroke="#333" stroke-width="1.2" />
<path d="M449.5,258.5 Q456.5,250.0 463.5,258.5 Q456.5,267.0 449.5,258.5 Z" fill="#d4d4d4"/>
<circle cx="456.5" cy="258.5" r="2.9" fill="#ececec"/><circle cx="456.5" cy="258.5" r="1.6" fill="#d4d4d4"/>
<path d="M472,252.5 H478 L479.5,254.0 H487 V264.5 H472 Z" fill="#9c9c9c" stroke="none" stroke-width="1" />
<text x="499.6" y="262.0" font-size="10" fill="#3a3a3a" textLength="24.7" lengthAdjust="spacingAndGlyphs" >Origin</text>
<rect x="447" y="271" width="100" height="18" fill="#ececec" />
<path d="M430.5,274.5 L438.5,280 L430.5,285.5 Z" fill="#fff" stroke="#333" stroke-width="1.2" />
<path d="M449.5,280 Q456.5,271.5 463.5,280 Q456.5,288.5 449.5,280 Z" fill="#8a8a8a"/>
<circle cx="456.5" cy="280" r="2.9" fill="#ececec"/><circle cx="456.5" cy="280" r="1.6" fill="#8a8a8a"/>
<path d="M472,274 H478 L479.5,275.5 H487 V286 H472 Z" fill="#9c9c9c" stroke="none" stroke-width="1" />
<text x="499.6" y="283.5" font-size="10" fill="#3a3a3a" textLength="40.3" lengthAdjust="spacingAndGlyphs" >Sketches</text>
<rect x="398.5" y="615.5" width="271" height="21.5" fill="#f1f1f1" stroke="#d6d6d6" stroke-width="1"/>
<text x="420.6" y="630" font-size="10.5" fill="#555" textLength="51.6" lengthAdjust="spacingAndGlyphs" >COMMENTS</text>
<circle cx="654.5" cy="626" r="4.6" fill="#222"/>
<path d="M651.5,626 H657.5 M654.5,623 V629" fill="none" stroke="#fff" stroke-width="1.4" />
<rect x="665" y="621" width="1" height="10" fill="#999" />
<rect x="715" y="616" width="214.5" height="22" fill="#f1f1f1" />
<ellipse cx="724.7" cy="626.6" rx="3.2" ry="7" fill="none" stroke="#555" stroke-width="1.3"/>
<path d="M720,622.5 Q731,619 732,626.5 Q731,631 722.5,630" fill="none" stroke="#555" stroke-width="1.3" />
<path d="M717.2,626.6 L720.5,623.5 V629.7 Z" fill="#555" stroke="none" stroke-width="1" />
<circle cx="723" cy="627" r="1" fill="#333"/><circle cx="727" cy="623" r="1" fill="#333"/>
<path d="M737.3,625 H742.2 L739.75,628.4 Z" fill="#222" stroke="none" stroke-width="1" />
<rect x="748" y="626" width="13" height="7.5" fill="none" stroke="#555" stroke-width="1.4"/>
<rect x="750.5" y="628.3" width="8" height="3" fill="#777" />
<path d="M749.5,625.5 L752,620.5 L761,621 L760,625.5" fill="none" stroke="#555" stroke-width="1.1" />
<path d="M773,628.5 Q771.5,627 772.5,626 Q774,625.5 775.5,627.5 V621 Q776.5,619.5 777.5,621 V626 V620 Q778.5,618.5 779.5,620 V626 V620.5 Q780.5,619 781.5,620.5 V626 V622.5 Q782.5,621 783.5,622.5 L784,628 Q783.5,633.5 778.5,634 Q775.5,634 773,628.5 Z" fill="#fff" stroke="#555" stroke-width="1.1" />
<circle cx="799" cy="626.3" r="4.6" fill="none" stroke="#444" stroke-width="1.6"/>
<path d="M802.5,629.5 L806,633" fill="none" stroke="#333" stroke-width="2.6" />
<path d="M807.5,620 V625.5 M804.8,622.8 H810.2" fill="none" stroke="#444" stroke-width="1.2" />
<circle cx="823.5" cy="625.5" r="5" fill="none" stroke="#444" stroke-width="1.6"/>
<path d="M827.3,629.3 L831.5,633.3" fill="none" stroke="#333" stroke-width="2.6" />
<path d="M818,633.5 H830 M830.5,620 V628" fill="none" stroke="#777" stroke-width="1" stroke-dasharray="1.5 1.5"/>
<path d="M837.3,625 H842.5 L839.9,628.4 Z" fill="#222" stroke="none" stroke-width="1" />
<rect x="848.5" y="619.8" width="14.5" height="10.5" fill="#6d7f99" rx="1.5"/>
<rect x="850.5" y="621.8" width="10.5" height="6.5" fill="#a9c7ea" />
<rect x="852.5" y="630.3" width="6.5" height="2.5" fill="#666" />
<rect x="851" y="632.5" width="9.5" height="1.5" fill="#555" />
<path d="M865,625 H870.2 L867.6,628.4 Z" fill="#222" stroke="none" stroke-width="1" />
<rect x="876.5" y="620" width="13.5" height="13.5" fill="#777" />
<rect x="877.5" y="621.0" width="1.7" height="1.7" fill="#e8e8e8" />
<rect x="877.5" y="623.6" width="1.7" height="1.7" fill="#e8e8e8" />
<rect x="877.5" y="626.2" width="1.7" height="1.7" fill="#e8e8e8" />
<rect x="877.5" y="628.8" width="1.7" height="1.7" fill="#e8e8e8" />
<rect x="877.5" y="631.4" width="1.7" height="1.7" fill="#e8e8e8" />
<rect x="880.1" y="621.0" width="1.7" height="1.7" fill="#e8e8e8" />
<rect x="880.1" y="623.6" width="1.7" height="1.7" fill="#e8e8e8" />
<rect x="880.1" y="626.2" width="1.7" height="1.7" fill="#e8e8e8" />
<rect x="880.1" y="628.8" width="1.7" height="1.7" fill="#e8e8e8" />
<rect x="880.1" y="631.4" width="1.7" height="1.7" fill="#e8e8e8" />
<rect x="882.7" y="621.0" width="1.7" height="1.7" fill="#e8e8e8" />
<rect x="882.7" y="623.6" width="1.7" height="1.7" fill="#e8e8e8" />
<rect x="882.7" y="626.2" width="1.7" height="1.7" fill="#e8e8e8" />
<rect x="882.7" y="628.8" width="1.7" height="1.7" fill="#e8e8e8" />
<rect x="882.7" y="631.4" width="1.7" height="1.7" fill="#e8e8e8" />
<rect x="885.3" y="621.0" width="1.7" height="1.7" fill="#e8e8e8" />
<rect x="885.3" y="623.6" width="1.7" height="1.7" fill="#e8e8e8" />
<rect x="885.3" y="626.2" width="1.7" height="1.7" fill="#e8e8e8" />
<rect x="885.3" y="628.8" width="1.7" height="1.7" fill="#e8e8e8" />
<rect x="885.3" y="631.4" width="1.7" height="1.7" fill="#e8e8e8" />
<rect x="887.9" y="621.0" width="1.7" height="1.7" fill="#e8e8e8" />
<rect x="887.9" y="623.6" width="1.7" height="1.7" fill="#e8e8e8" />
<rect x="887.9" y="626.2" width="1.7" height="1.7" fill="#e8e8e8" />
<rect x="887.9" y="628.8" width="1.7" height="1.7" fill="#e8e8e8" />
<rect x="887.9" y="631.4" width="1.7" height="1.7" fill="#e8e8e8" />
<path d="M893,625 H898.2 L895.6,628.4 Z" fill="#222" stroke="none" stroke-width="1" />
<rect x="904" y="620" width="14" height="13" fill="#5a7fb8" rx="1"/>
<rect x="905.3" y="621.3" width="5.2" height="4.4" fill="#9cc0ea" />
<rect x="911.6" y="621.3" width="5.2" height="4.4" fill="#9cc0ea" />
<rect x="905.3" y="627.5" width="5.2" height="4.4" fill="#9cc0ea" />
<rect x="911.6" y="627.5" width="5.2" height="4.4" fill="#9cc0ea" />
<path d="M921,625 H926.2 L923.6,628.4 Z" fill="#222" stroke="none" stroke-width="1" />
<path d="M404.5,657.5 V670.5" fill="none" stroke="#444" stroke-width="2" />
<path d="M416.5,657.5 V670.5 L406,664 Z" fill="#444" stroke="none" stroke-width="1" />
<path d="M427,664 L436,657.5 V670.5 Z" fill="#444" stroke="none" stroke-width="1" />
<rect x="437" y="661" width="2" height="6" fill="#444" />
<path d="M449,657.5 L460.5,664 L449,670.5 Z" fill="#444" stroke="none" stroke-width="1" />
<rect x="471" y="661" width="2" height="6" fill="#444" />
<path d="M474,657.5 L483,664 L474,670.5 Z" fill="#444" stroke="none" stroke-width="1" />
<path d="M494.5,657.5 V670.5 L505,664 Z" fill="#444" stroke="none" stroke-width="1" />
<path d="M506.5,657.5 V670.5" fill="none" stroke="#444" stroke-width="2" />
<rect x="527.5" y="656.5" width="11.5" height="12" fill="none" stroke="#777" stroke-width="1" stroke-dasharray="2 1.2"/>
<circle cx="527.5" cy="656.5" r="1.1" fill="#2a5f9a"/>
<circle cx="539" cy="656.5" r="1.1" fill="#2a5f9a"/>
<circle cx="527.5" cy="668.5" r="1.1" fill="#2a5f9a"/>
<path d="M534,666.5 L539,661.5" fill="none" stroke="#f0a040" stroke-width="2.4" />
<rect x="534" y="670" width="1.2" height="9" fill="#bbb" />
<path d="M539.2,650 H550 V653 Q550,656 547,656 H542.2 Q539.2,656 539.2,653 Z" fill="#555" stroke="none" stroke-width="1" />
<rect x="543.6" y="655" width="2" height="24" fill="#444" />
<line x1="1232" y1="664" x2="1239.00" y2="664.00" stroke="#8c8c8c" stroke-width="2.2"/><line x1="1232" y1="664" x2="1236.95" y2="668.95" stroke="#8c8c8c" stroke-width="2.2"/><line x1="1232" y1="664" x2="1232.00" y2="671.00" stroke="#8c8c8c" stroke-width="2.2"/><line x1="1232" y1="664" x2="1227.05" y2="668.95" stroke="#8c8c8c" stroke-width="2.2"/><line x1="1232" y1="664" x2="1225.00" y2="664.00" stroke="#8c8c8c" stroke-width="2.2"/><line x1="1232" y1="664" x2="1227.05" y2="659.05" stroke="#8c8c8c" stroke-width="2.2"/><line x1="1232" y1="664" x2="1232.00" y2="657.00" stroke="#8c8c8c" stroke-width="2.2"/><line x1="1232" y1="664" x2="1236.95" y2="659.05" stroke="#8c8c8c" stroke-width="2.2"/><circle cx="1232" cy="664" r="5.04" fill="#8c8c8c"/><circle cx="1232" cy="664" r="2.10" fill="#f1f1f1"/>
<defs><linearGradient id="vc" x1="0" y1="0" x2="0" y2="1"><stop offset="0" stop-color="#f2f2f2"/><stop offset="1" stop-color="#d8d8d8"/></linearGradient></defs>
<rect x="1189" y="179.5" width="36" height="35.5" fill="url(#vc)" stroke="#c2c2c2" stroke-width="1.6"/>
<text x="1195.4" y="200.8" font-size="11" fill="#7a7a7a" textLength="23.4" lengthAdjust="spacingAndGlyphs" font-weight="bold" >RIGHT</text>
<text x="1189" y="176.7" font-size="9.5" fill="#8a84d0" font-weight="bold" >Z</text>
<text x="1184.5" y="220.4" font-size="9.5" fill="#e09090" font-weight="bold" >X</text>
<text x="1226.5" y="215.4" font-size="9.5" fill="#a0dca0" font-weight="bold" >Y</text>
<rect x="1227.5" y="240" width="20.5" height="157" fill="#efefef" />
<path d="M1232,249.2 L1236.5,246.4 V252 Z M1236.5,249.2 L1241,246.4 V252 Z" fill="#333" stroke="none" stroke-width="1" />
<text transform="translate(1236.8,294.9) rotate(90)" x="0" y="0" font-size="10.5" fill="#333" text-anchor="middle" dominant-baseline="central" textLength="75" lengthAdjust="spacingAndGlyphs">SKETCH PALETTE</text>
<defs><radialGradient id="halo"><stop offset="0.45" stop-color="#bdbdbd" stop-opacity="0.9"/><stop offset="1" stop-color="#d8d8d8" stop-opacity="0"/></radialGradient></defs>
<circle cx="788" cy="552.7" r="6.6" fill="none" stroke="#cfcfcf" stroke-width="3.6"/>
<path d="M768,555.5 V572.5 H784.5" fill="none" stroke="#c2c2d0" stroke-width="1.3" />
<line x1="524.3" y1="552.5" x2="634" y2="552.5" stroke="#222" stroke-width="1.3" />
<line x1="634" y1="552.5" x2="788" y2="552.5" stroke="#111" stroke-width="2" />
<line x1="788" y1="552.5" x2="1036" y2="552.5" stroke="#1c1c1c" stroke-width="2" stroke-dasharray="11 2.4" stroke-dashoffset="0.5"/>
<circle cx="659.9" cy="552.5" r="3.2" fill="#fff" stroke="#8a8a8a" stroke-width="1.2"/>
<circle cx="672" cy="459.3" r="3" fill="#fff" stroke="#8a8a8a" stroke-width="1.2"/>
<path d="M634,552.5 L680.5,459.2 H729.3 L703.6,510 H756" fill="none" stroke="#111" stroke-width="2" stroke-linejoin="miter"/>
<circle cx="756" cy="510" r="3.6" fill="#222"/>
<path d="M529,552.5 A105,105 0 0 1 680.8,458.4" fill="none" stroke="#111" stroke-width="1.2" />
<path d="M529.50,552.50 L527.16,543.26 L533.41,543.81 Z" fill="#111"/>
<path d="M680.80,458.40 L671.36,457.11 L674.20,451.52 Z" fill="#111"/>
<text transform="translate(558,464) rotate(-40)" x="0" y="0" font-size="13" fill="#333" text-anchor="middle" dominant-baseline="central" textLength="36" lengthAdjust="spacingAndGlyphs">116.6°</text>
<line x1="665.3" y1="452.6" x2="621.1" y2="543.7" stroke="#111" stroke-width="1.1" />
<path d="M665.30,452.60 L663.67,461.82 L659.04,459.56 Z" fill="#111"/>
<path d="M621.10,543.70 L622.73,534.48 L627.36,536.74 Z" fill="#111"/>
<line x1="614.8" y1="542.8" x2="630.1" y2="550" stroke="#111" stroke-width="1.2" />
<line x1="662.6" y1="449" x2="668" y2="452" stroke="#111" stroke-width="1.2" />
<text transform="translate(626,510.3) rotate(-63.4)" x="0" y="0" font-size="13" fill="#333" text-anchor="middle" dominant-baseline="central" textLength="35" lengthAdjust="spacingAndGlyphs">22.00</text>
<line x1="680.5" y1="436" x2="680.5" y2="453" stroke="#222" stroke-width="1.3" />
<line x1="729.3" y1="436" x2="729.3" y2="453" stroke="#222" stroke-width="1.3" />
<line x1="681" y1="441.3" x2="729" y2="441.3" stroke="#111" stroke-width="1.1" />
<path d="M681.00,441.30 L690.00,438.72 L690.00,443.88 Z" fill="#111"/>
<path d="M729.00,441.30 L720.00,443.88 L720.00,438.72 Z" fill="#111"/>
<text x="689" y="436" font-size="12" fill="#333" textLength="32" lengthAdjust="spacingAndGlyphs" >10.00</text>
<path d="M696.4,460.2 A33,33 0 0 0 712.3,487.3" fill="none" stroke="#111" stroke-width="1.2" />
<path d="M696.30,459.50 L698.88,467.50 L693.72,467.50 Z" fill="#111"/>
<path d="M712.50,487.60 L705.80,482.52 L710.02,479.57 Z" fill="#111"/>
<text transform="translate(707.5,472.3) rotate(25)" x="0" y="0" font-size="13" fill="#333" text-anchor="middle" dominant-baseline="central" textLength="33" lengthAdjust="spacingAndGlyphs">63.4°</text>
<line x1="737.8" y1="467.2" x2="717.2" y2="508.9" stroke="#111" stroke-width="1.1" />
<path d="M737.80,467.20 L736.12,476.41 L731.50,474.13 Z" fill="#111"/>
<path d="M717.20,508.90 L718.88,499.69 L723.50,501.97 Z" fill="#111"/>
<line x1="734.4" y1="462.2" x2="744.4" y2="467.2" stroke="#111" stroke-width="1.2" />
<line x1="708.3" y1="512.8" x2="718.3" y2="517.8" stroke="#111" stroke-width="1.2" />
<text transform="translate(718.4,486.7) rotate(-63.4)" x="0" y="0" font-size="13" fill="#333" text-anchor="middle" dominant-baseline="central" textLength="33" lengthAdjust="spacingAndGlyphs">12.00</text>
<line x1="703.6" y1="514" x2="703.6" y2="531" stroke="#222" stroke-width="1.3" />
<line x1="756" y1="514" x2="756" y2="531" stroke="#222" stroke-width="1.3" />
<line x1="704" y1="524.7" x2="756" y2="524.7" stroke="#111" stroke-width="1.1" />
<path d="M704.00,524.70 L713.00,522.12 L713.00,527.28 Z" fill="#111"/>
<path d="M756.00,524.70 L747.00,527.28 L747.00,522.12 Z" fill="#111"/>
<text x="716" y="519.6" font-size="11.5" fill="#333" textLength="28" lengthAdjust="spacingAndGlyphs" >11.00</text>
<line x1="634" y1="556" x2="634" y2="592" stroke="#222" stroke-width="1.3" />
<line x1="788" y1="556" x2="788" y2="592" stroke="#222" stroke-width="1.3" />
<line x1="634.5" y1="584.7" x2="787.5" y2="584.7" stroke="#111" stroke-width="1.1" />
<path d="M634.50,584.70 L644.50,582.01 L644.50,587.39 Z" fill="#111"/>
<path d="M787.50,584.70 L777.50,587.39 L777.50,582.01 Z" fill="#111"/>
<text x="692" y="580.2" font-size="12.5" fill="#333" textLength="32" lengthAdjust="spacingAndGlyphs" >32.18</text>
<line x1="788" y1="552.5" x2="900" y2="328.3" stroke="#111" stroke-width="1.8" />
<circle cx="900" cy="328.3" r="3.5" fill="#fff" stroke="#8a8a8a" stroke-width="1.2"/>
<line x1="837" y1="266" x2="883.6" y2="360.5" stroke="#9b4a94" stroke-width="3.2" />
<line x1="883.6" y1="360.5" x2="980.8" y2="552.5" stroke="#4b85dc" stroke-width="3.2" />
<circle cx="837" cy="266" r="3.4" fill="#fff" stroke="#c07aa8" stroke-width="1.2"/>
<circle cx="1038.6" cy="552.6" r="3.3" fill="#fff" stroke="#8a8a8a" stroke-width="1.2"/>
<path d="M821.7,552.5 A33.7,33.7 0 0 0 803.1,522.4" fill="none" stroke="#111" stroke-width="1.2" />
<path d="M821.70,552.50 L819.12,544.50 L824.28,544.50 Z" fill="#111"/>
<path d="M803.10,522.40 L811.44,523.45 L809.26,528.12 Z" fill="#111"/>
<text transform="translate(831,532) rotate(37)" x="0" y="0" font-size="13" fill="#333" text-anchor="middle" dominant-baseline="central" textLength="33" lengthAdjust="spacingAndGlyphs">63.4°</text>
<path d="M943.3,552.5 A37.5,37.5 0 0 1 963,520.3" fill="none" stroke="#111" stroke-width="1.2" />
<path d="M943.30,552.50 L940.72,544.50 L945.88,544.50 Z" fill="#111"/>
<path d="M963.00,520.30 L956.84,526.02 L954.66,521.35 Z" fill="#111"/>
<text transform="translate(938.5,525) rotate(-37)" x="0" y="0" font-size="13" fill="#333" text-anchor="middle" dominant-baseline="central" textLength="33" lengthAdjust="spacingAndGlyphs">63.4°</text>
<circle cx="788" cy="552.7" r="4.3" fill="#111"/>
<path d="M848.2,286.4 L858.6,277.4 V281.7 H910.5 V291.6 H858.6 V296.3 Z" fill="#fff600" stroke="#111" stroke-width="1.2" />
<rect x="771.5" y="238.5" width="235.5" height="330" fill="none" stroke="#cf1419" stroke-width="3"/>
</svg>
</body></html>
